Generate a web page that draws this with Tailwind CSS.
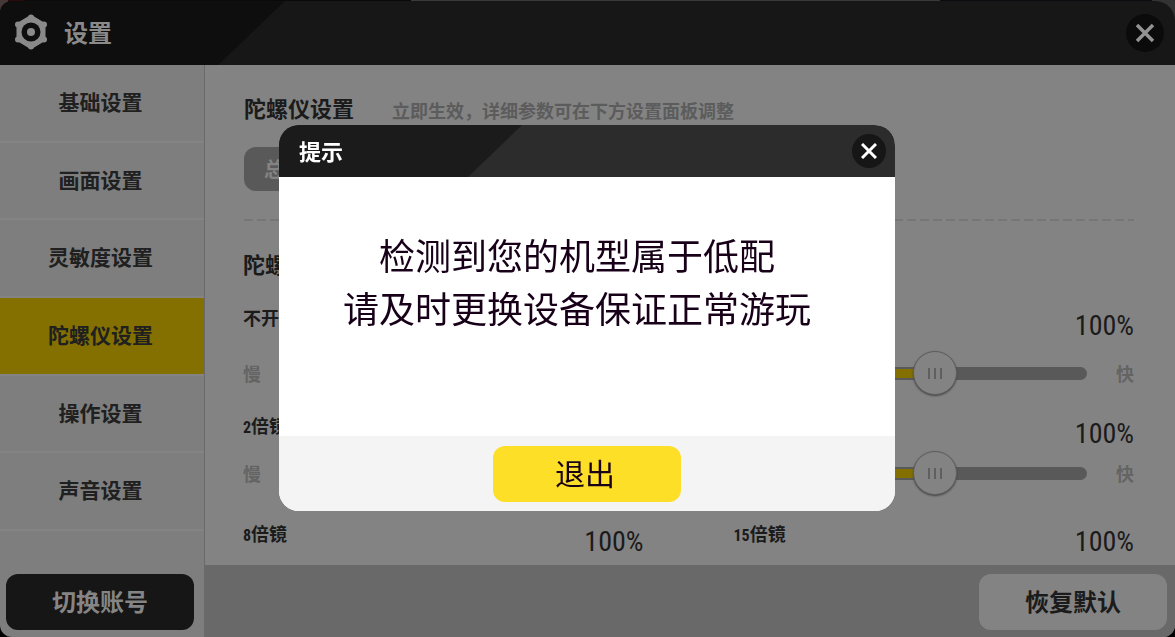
<!DOCTYPE html>
<html lang="zh-CN">
<head>
  <meta charset="UTF-8" />
  <meta name="viewport" content="width=device-width, initial-scale=1.0" />
  <title>设置</title>
  <script src="https://cdn.jsdelivr.net/npm/@tailwindcss/browser@4"></script>
</head>
<body class="bg-black font-['Noto_Sans_CJK_SC',sans-serif] text-[#1b1b1b]">
  <div class="h-screen flex flex-col overflow-hidden rounded-b-xl">
    <!-- Header -->
    <div class="shrink-0 bg-[linear-gradient(90deg,#453836_0_8px,#2a0a0a_8px_24px,#0a0a0a_24px_35%,#3a3a3a_35%_80%,#0c0c10_80%_98%,#333_98%)]">
      <header class="relative mt-px h-16 bg-[#171717] rounded-tl-xl rounded-tr-[20px] overflow-hidden flex items-center justify-between pl-[14px] pr-[11px]">
        <div class="absolute inset-y-0 left-0 w-[285px] bg-[#0e0e0e] [clip-path:polygon(0_0,100%_0,218px_100%,0_100%)]"></div>
        <div class="relative flex items-center gap-4 pb-[2px]">
          <svg class="w-[34px] h-9" viewBox="0 0 34 36" fill="none">
            <path d="M17 3 29.500 10.500v15L17 33 4.500 25.500v-15Z" fill="#8a8a8a" stroke="#8a8a8a" stroke-width="4" stroke-linejoin="round" />
            <g fill="#8a8a8a">
              <circle cx="17" cy="3.500" r="3" /><circle cx="30" cy="10.500" r="3" /><circle cx="30" cy="25.500" r="3" />
              <circle cx="17" cy="32.500" r="3" /><circle cx="4" cy="25.500" r="3" /><circle cx="4" cy="10.500" r="3" />
            </g>
            <circle cx="17" cy="18" r="9.500" fill="#0e0e0e" />
            <circle cx="17" cy="18" r="4" fill="#8a8a8a" />
          </svg>
          <h1 class="text-2xl font-bold text-[#8a8a8a]">设置</h1>
        </div>
        <button type="button" aria-label="关闭设置" class="w-[38px] h-[38px] rounded-full bg-[#0b0b0b] flex items-center justify-center">
          <svg class="w-5 h-5" viewBox="0 0 20 20" stroke="#939393" stroke-width="3.500"><path d="M2 2 18 18M18 2 2 18" /></svg>
        </button>
      </header>
    </div>

    <div class="flex-1 flex min-h-0">
      <!-- Sidebar -->
      <aside class="w-[205px] shrink-0 bg-[#7e7e7e] border-r border-[#6a6a6a] flex flex-col">
        <nav class="flex-1 flex flex-col text-[21px] font-bold text-[#202020]">
          <a href="#" class="flex-1 flex items-center justify-center border-b-2 border-[#848484] pr-[3px] pb-[2px]">基础设置</a>
          <a href="#" class="flex-1 flex items-center justify-center border-b-2 border-[#848484] pr-[3px] pb-[2px]">画面设置</a>
          <a href="#" class="flex-1 flex items-center justify-center border-b-2 border-[#848484] pr-[3px] pb-[2px]">灵敏度设置</a>
          <a href="#" aria-current="page" class="flex-1 flex items-center justify-center border-b-2 border-[#848484] pr-[3px] pb-[2px] bg-[#837000]">陀螺仪设置</a>
          <a href="#" class="flex-1 flex items-center justify-center border-b-2 border-[#848484] pr-[3px] pb-[2px]">操作设置</a>
          <a href="#" class="flex-1 flex items-center justify-center border-b-2 border-[#848484] pr-[3px] pb-[2px]">声音设置</a>
        </nav>
        <div class="h-[106px] flex items-end pl-[6px] pr-[10px] pb-[7px]">
          <button type="button" class="w-full h-14 rounded-xl bg-[#161616] pb-[2px] text-2xl font-bold text-[#858585]">切换账号</button>
        </div>
      </aside>

      <main class="flex-1 min-w-0 flex flex-col bg-[#838383]">
        <!-- Gyroscope settings -->
        <div class="flex-1 min-h-0 overflow-hidden pl-[38px] pr-[41px] pt-[26px]">
          <div class="flex items-center gap-[38px] h-8 pl-px">
            <h2 class="text-[22px] font-bold">陀螺仪设置</h2>
            <p class="text-lg font-bold text-[#5c5c5c] pt-[6px]">立即生效，详细参数可在下方设置面板调整</p>
          </div>
          <button type="button" class="mt-6 ml-px block w-[150px] h-11 rounded-xl bg-[#595959] pl-5 text-left text-xl font-bold text-[#838383]">总是</button>
          <div class="mt-7 ml-px h-[2px] bg-[repeating-linear-gradient(90deg,#767676_0_9px,transparent_9px_13px)]"></div>

          <h2 class="mt-[26px] text-[22px] leading-8 font-bold">陀螺仪灵敏度</h2>
          <div class="mt-[18px] grid grid-cols-2 gap-x-[90px]">
            <div class="h-[108px]">
              <h3 class="text-lg leading-10 h-12 font-bold">不开镜</h3>
              <div class="h-8 mt-3 flex items-center text-lg font-bold text-[#646464]">慢</div>
            </div>
            <div class="h-[108px]">
              <div class="h-12 flex justify-end"><output for="s1" class="text-[28px] leading-[58px] font-['Roboto_Condensed','Liberation_Sans_Narrow',sans-serif]">100%</output></div>
              <div class="h-8 mt-3 flex items-center text-lg font-bold text-[#646464]">
                <label for="s1">慢</label>
                <input id="s1" type="range" min="0" max="200" value="100" class="ml-[31px] mr-[29px] flex-1 min-w-0 h-[13px] rounded-full appearance-none bg-[#595959] bg-[linear-gradient(#837000,#837000)] bg-[length:50%_9px] bg-[position:2px_center] bg-no-repeat [&::-webkit-slider-thumb]:appearance-none [&::-webkit-slider-thumb]:w-11 [&::-webkit-slider-thumb]:h-11 [&::-webkit-slider-thumb]:rounded-full [&::-webkit-slider-thumb]:border [&::-webkit-slider-thumb]:border-[#5e5e5e] [&::-webkit-slider-thumb]:bg-[#838383] [&::-webkit-slider-thumb]:bg-[repeating-linear-gradient(90deg,#5f5f5f_0_2px,transparent_2px_6px)] [&::-webkit-slider-thumb]:bg-[length:14px_11px] [&::-webkit-slider-thumb]:bg-center [&::-webkit-slider-thumb]:bg-no-repeat [&::-webkit-slider-thumb]:shadow-[0_1px_2px_#444]" />
                <span>快</span>
              </div>
            </div>

            <div class="h-[108px]">
              <h3 class="text-lg leading-10 h-12 font-bold"><span class="text-base font-['Roboto_Condensed','Liberation_Sans_Narrow',sans-serif]">2</span>倍镜</h3>
              <div class="h-8 mt-1 flex items-center text-lg font-bold text-[#646464]">慢</div>
            </div>
            <div class="h-[108px]">
              <div class="h-12 flex justify-end"><output for="s2" class="text-[28px] leading-[58px] font-['Roboto_Condensed','Liberation_Sans_Narrow',sans-serif]">100%</output></div>
              <div class="h-8 mt-1 flex items-center text-lg font-bold text-[#646464]">
                <label for="s2">慢</label>
                <input id="s2" type="range" min="0" max="200" value="100" class="ml-[31px] mr-[29px] flex-1 min-w-0 h-[13px] rounded-full appearance-none bg-[#595959] bg-[linear-gradient(#837000,#837000)] bg-[length:50%_9px] bg-[position:2px_center] bg-no-repeat [&::-webkit-slider-thumb]:appearance-none [&::-webkit-slider-thumb]:w-11 [&::-webkit-slider-thumb]:h-11 [&::-webkit-slider-thumb]:rounded-full [&::-webkit-slider-thumb]:border [&::-webkit-slider-thumb]:border-[#5e5e5e] [&::-webkit-slider-thumb]:bg-[#838383] [&::-webkit-slider-thumb]:bg-[repeating-linear-gradient(90deg,#5f5f5f_0_2px,transparent_2px_6px)] [&::-webkit-slider-thumb]:bg-[length:14px_11px] [&::-webkit-slider-thumb]:bg-center [&::-webkit-slider-thumb]:bg-no-repeat [&::-webkit-slider-thumb]:shadow-[0_1px_2px_#444]" />
                <span>快</span>
              </div>
            </div>

            <div class="h-12 flex justify-between">
              <h3 class="text-lg leading-10 font-bold"><span class="text-base font-['Roboto_Condensed','Liberation_Sans_Narrow',sans-serif]">8</span>倍镜</h3>
              <span class="text-[28px] leading-[58px] font-['Roboto_Condensed','Liberation_Sans_Narrow',sans-serif]">100%</span>
            </div>
            <div class="h-12 flex justify-between">
              <h3 class="text-lg leading-10 font-bold"><span class="text-base font-['Roboto_Condensed','Liberation_Sans_Narrow',sans-serif]">15</span>倍镜</h3>
              <span class="text-[28px] leading-[58px] font-['Roboto_Condensed','Liberation_Sans_Narrow',sans-serif]">100%</span>
            </div>
          </div>
        </div>

        <footer class="h-[72px] shrink-0 bg-[#696969] flex items-end justify-end pr-2 pb-[7px]">
          <button type="button" class="w-[188px] h-14 rounded-xl bg-[#838383] pb-[2px] text-2xl font-bold">恢复默认</button>
        </footer>
      </main>
    </div>
  </div>

  <!-- Notice dialog -->
  <div class="fixed inset-0 flex items-center justify-center pr-px pb-px">
    <div role="dialog" aria-labelledby="noticeTitle" class="w-[616px] rounded-[20px] overflow-hidden bg-white">
      <div class="relative h-[52px] bg-[#2c2c2c] flex items-center justify-between pl-5 pr-[9px]">
        <div class="absolute inset-y-0 left-0 w-[243px] bg-[#1b1b1b] [clip-path:polygon(0_0,100%_0,189px_100%,0_100%)]"></div>
        <h2 id="noticeTitle" class="relative pb-[2px] text-[22px] font-bold text-white">提示</h2>
        <button type="button" aria-label="关闭" class="w-[34px] h-[34px] rounded-full bg-[#161616] flex items-center justify-center">
          <svg class="w-4 h-4" viewBox="0 0 16 16" stroke="#fff" stroke-width="3"><path d="M1 1 15 15M15 1 1 15" /></svg>
        </button>
      </div>
      <p class="h-[259px] pt-[51px] pr-5 text-center text-4xl leading-[53px] text-[#180018]">检测到您的机型属于低配<br />请及时更换设备保证正常游玩</p>
      <div class="h-[75px] bg-[#f4f4f4] flex items-center justify-center">
        <button type="button" class="w-[188px] h-14 rounded-xl bg-[#fedf27] pb-1 pr-1 text-3xl text-[#180018]">退出</button>
      </div>
    </div>
  </div>
</body>
</html>
